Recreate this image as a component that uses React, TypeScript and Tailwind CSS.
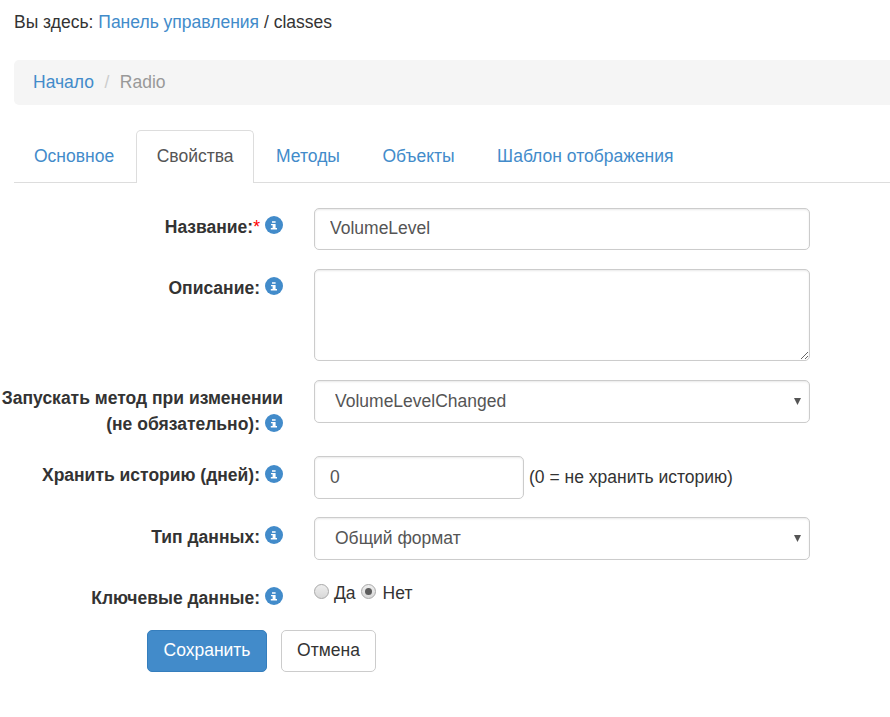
import { useState, type ReactNode } from 'react';
import { clsx } from 'clsx';

const TABS = ['Основное', 'Свойства', 'Методы', 'Объекты', 'Шаблон отображения'];

const FIELD = 'block rounded-[5px] border border-[#ccc] bg-white text-[#555] shadow-[inset_0_1px_2px_rgba(0,0,0,0.09)] outline-none';

function InfoIcon({ className = 'align-[-2px]' }: { className?: string }) {
  return (
    <svg className={clsx('ml-[5px] inline-block h-[18px] w-[18px]', className)} viewBox="0 0 18 18" aria-hidden="true">
      <circle cx="9" cy="9" r="9" fill="#428bca" />
      <path d="M7 5.2h3.6v1.6H7zM6 8h4.6v4H12v1.4H5.8V12h1.8V9.2H6z" fill="#fff" />
    </svg>
  );
}

interface RowProps {
  label: ReactNode;
  required?: boolean;
  className?: string;
  labelClass?: string;
  iconClass?: string;
  children: ReactNode;
}

function Row({ label, required, className, labelClass = 'pt-[6px]', iconClass, children }: RowProps) {
  return (
    <div className={clsx('flex items-start gap-[31px]', className)}>
      <label className={clsx('w-[283px] shrink-0 text-right font-bold leading-[26px] whitespace-nowrap', labelClass)}>
        {label}
        {required && <span className="font-normal text-[#f00]">*</span>}
        <InfoIcon className={iconClass} />
      </label>
      {children}
    </div>
  );
}

function Select({ options }: { options: string[] }) {
  return (
    <div className="relative w-[496px]">
      <select className={clsx(FIELD, 'h-[43px] w-full appearance-none px-5')}>
        {options.map((o) => <option key={o}>{o}</option>)}
      </select>
      <svg className="pointer-events-none absolute top-[18px] right-[9px]" width="7" height="7" viewBox="0 0 7 7">
        <path d="M0 0h7L3.5 7z" fill="#555" />
      </svg>
    </div>
  );
}

function Radio({ checked, onChange }: { checked: boolean; onChange: () => void }) {
  return (
    <span className="relative mt-[-4px] inline-flex h-[15px] w-[15px] items-center justify-center">
      <input
        type="radio"
        name="data_key"
        checked={checked}
        onChange={onChange}
        className="h-[15px] w-[15px] appearance-none rounded-full border border-[#a8a8a8] bg-linear-to-b from-[#eee] to-[#d8d8d8]"
      />
      {checked && <span className="absolute h-[7px] w-[7px] rounded-full bg-[#5c5c5c]" />}
    </span>
  );
}

export default function App() {
  const [tab, setTab] = useState('Свойства');
  const [isKey, setIsKey] = useState(false);

  return (
    <div className="h-[717px] w-full overflow-hidden bg-white font-['Liberation_Sans',Arial,sans-serif] text-[17.5px] leading-[25px] text-[#333]">
      <div className="pt-[10px] pl-[14px]">
        Вы здесь: <a href="#" className="text-[#428bca]">Панель управления</a> / classes
      </div>

      <ol className="mt-[25px] ml-[14px] flex h-[45px] items-center rounded-l-[5px] bg-[#f5f5f5] pb-px pl-[19px]">
        <li><a href="#" className="text-[#428bca]">Начало</a></li>
        <li className="pr-[10.5px] pl-[10.5px] text-[#ccc]">/</li>
        <li className="text-[#999]">Radio</li>
      </ol>

      <ul className="mt-[25px] ml-[14px] flex h-[53px] gap-[1.5px] border-b border-[#ddd]">
        {TABS.map((t) => (
          <li key={t} className="first:-ml-[0.5px]">
            <button
              onClick={() => setTab(t)}
              className={clsx(
                'h-[53px] rounded-t-[5px] border border-b-0 px-[19.5px] pb-[2px] whitespace-nowrap',
                t === tab ? 'border-[#ddd] bg-white text-[#555]' : 'border-transparent text-[#428bca]'
              )}
            >
              {t}
            </button>
          </li>
        ))}
      </ul>

      <form className="mt-[25px]" onSubmit={(e) => e.preventDefault()}>
        <Row label="Название:" required className="h-[61px]" iconClass="align-[-1px]">
          <input className={clsx(FIELD, 'h-[42px] w-[496px] px-[15px] pb-[2px]')} defaultValue="VolumeLevel" />
        </Row>
        <Row label="Описание:" className="h-[111px]" iconClass="align-[-1px]">
          <textarea className={clsx(FIELD, 'h-[92px] w-[496px] resize px-[15px] py-2')} />
        </Row>
        <Row label={<>Запускать метод при изменении<br />(не обязательно):</>} className="h-[76px]" labelClass="pt-[5px]">
          <Select options={['VolumeLevelChanged']} />
        </Row>
        <Row label="Хранить историю (дней):" className="h-[61px]">
          <div className="flex items-center gap-[5px]">
            <input className={clsx(FIELD, 'h-[43px] w-[210px] px-[15px]')} defaultValue="0" />
            <span>(0 = не хранить историю)</span>
          </div>
        </Row>
        <Row label="Тип данных:" className="h-[61px]" labelClass="pt-[7px]" iconClass="align-[-1px]">
          <Select options={['Общий формат']} />
        </Row>
        <Row label="Ключевые данные:" className="h-[52px]" labelClass="pt-[7px]" iconClass="align-[-1px]">
          <div className="flex items-center pt-[3px]">
            <Radio checked={isKey} onChange={() => setIsKey(true)} />
            <span className="mr-[5px] ml-[5px]">Да</span>
            <Radio checked={!isKey} onChange={() => setIsKey(false)} />
            <span className="ml-[7px]">Нет</span>
          </div>
        </Row>
        <div className="flex gap-[14px] pl-[147px]">
          <button className="h-[42px] w-[120px] rounded-[5px] border border-[#357ebd] bg-[#428bca] pb-[2px] text-white">Сохранить</button>
          <button className="h-[42px] w-[95px] rounded-[5px] border border-[#ccc] bg-white pb-[2px]">Отмена</button>
        </div>
      </form>
    </div>
  );
}
